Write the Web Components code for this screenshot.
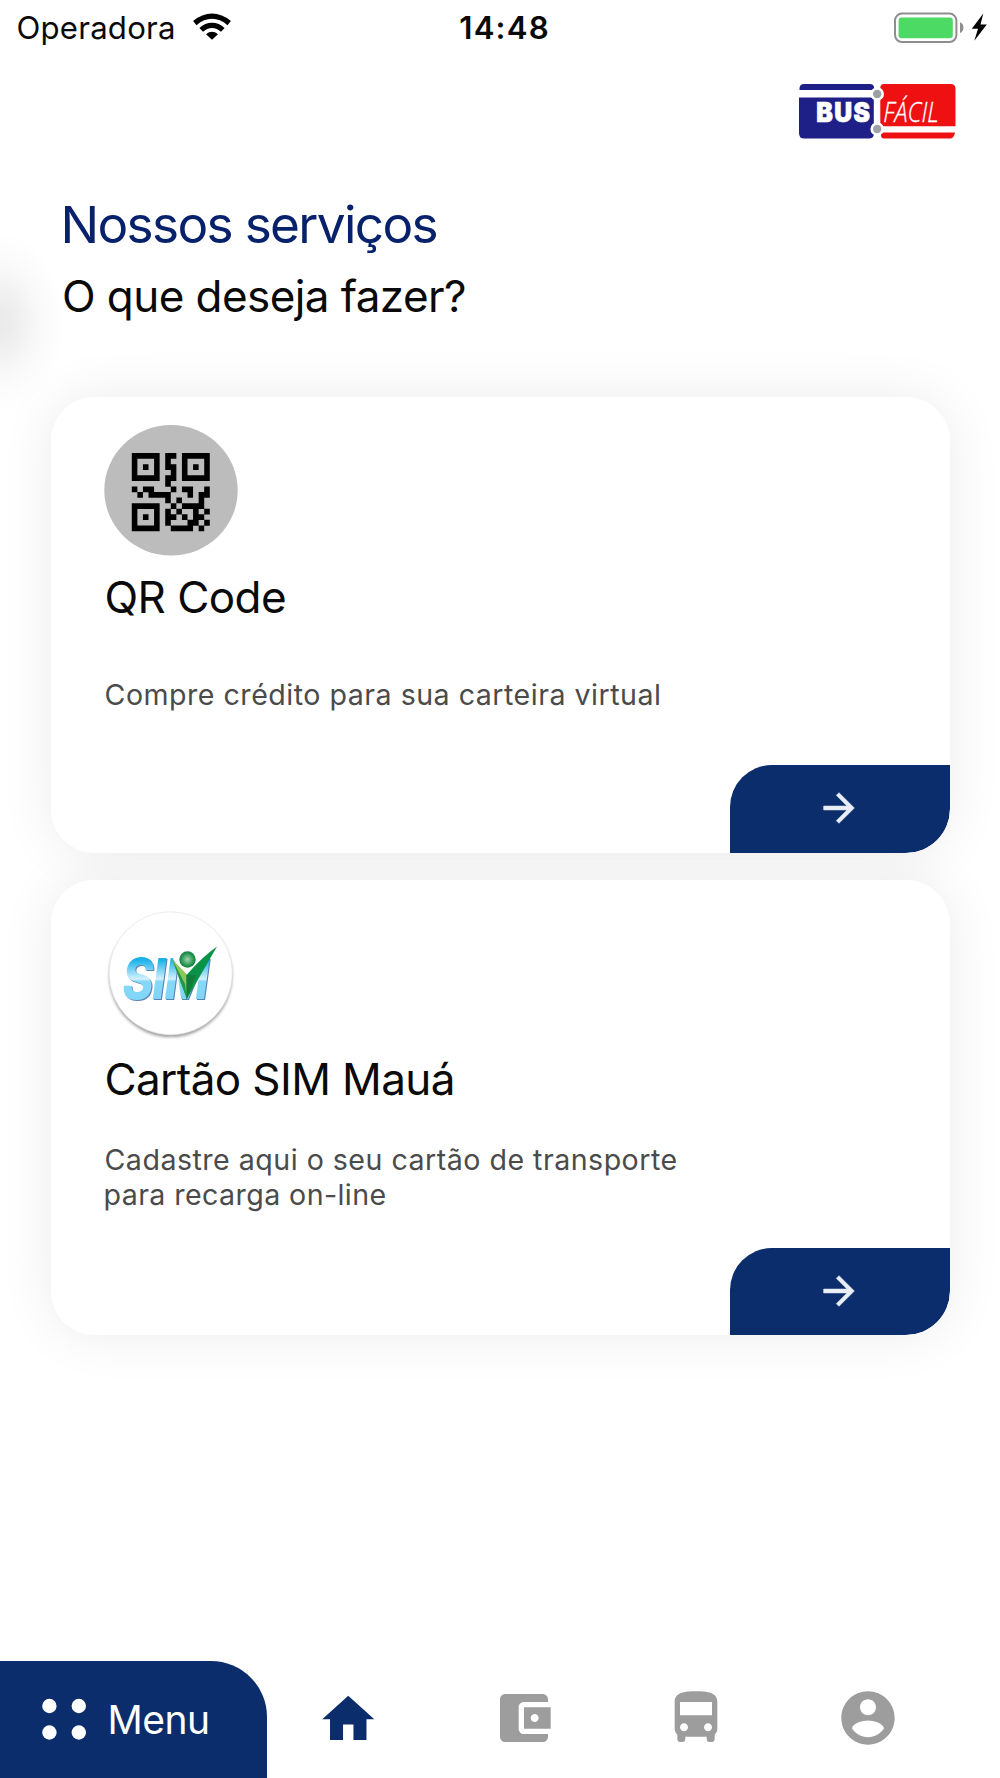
<!DOCTYPE html>
<html lang="pt-BR">
<head>
<meta charset="utf-8">
<title>Bus Fácil</title>
<style>
html,body{margin:0;background:#fff}
body{width:1000px;height:1778px;overflow:hidden;font-family:Inter,"Liberation Sans",sans-serif;color:#0a0a0a}
</style>
</head>
<body>
<bus-app></bus-app>
<script>
const define = (name, html, ready) => customElements.define(name, class extends HTMLElement {
  connectedCallback() {
    if (!this.shadowRoot) {
      const t = document.createElement('template');
      t.innerHTML = html;
      this.attachShadow({mode: 'open'}).append(t.content.cloneNode(true));
    }
    if (ready) ready(this);
  }
});

/* One line of text, tracked so that its ink spans the given width. */
define('fit-text', `
<style>:host{display:block;white-space:nowrap}</style><slot></slot>`, el => {
  const s = getComputedStyle(el), text = el.textContent;
  const ctx = document.createElement('canvas').getContext('2d');
  ctx.font = `${s.fontWeight} ${s.fontSize} ${s.fontFamily}`;
  const m = ctx.measureText(text);
  const ink = m.actualBoundingBoxLeft + m.actualBoundingBoxRight;
  el.style.letterSpacing = ((el.getAttribute('ink') - ink) / (text.length - 1)).toFixed(3) + 'px';
  el.style.marginLeft = m.actualBoundingBoxLeft.toFixed(2) + 'px';
});

define('status-bar', `
<style>
:host{display:grid;grid-template-columns:1fr auto 1fr;height:55px;line-height:57px;font-size:31.200px;box-sizing:border-box;padding:0 12px 0 17.500px}
.left,.right{display:flex}
.left svg{margin:13px 0 0 18px}
.right{justify-content:flex-end}
.right svg{margin:12px .5px 0 0}
.time{font-weight:600;width:88px;padding-left:1.500px;margin-right:-1.500px}
</style>
<div class="left"><fit-text ink="156.500" style="width:158px">Operadora</fit-text>
<svg width="38" height="27" viewBox="0 0 38 27"><g fill="none" stroke="#000"><path d="M1.800 10.100Q10 3.200 19 3.200T36.200 10.100" stroke-width="5.300"/><path d="M8.200 16.900Q13 12.400 19 12.400T29.800 16.900" stroke-width="5.300"/></g><path d="M13 21.300Q19 16.400 25 21.300L19 26.800z"/></svg></div>
<div class="time"><fit-text ink="87.500">14:48</fit-text></div>
<div class="right"><svg width="95" height="31" viewBox="0 0 95 31"><rect x="2" y="1.600" width="61.400" height="28.400" rx="7" fill="#fff" stroke="#8e8e8e" stroke-width="2"/><rect x="5.600" y="5.400" width="54.200" height="20.800" rx="3" fill="#4cd964"/><path d="M67 10.200c4.600 1 4.600 9.800 0 10.800z" fill="#8e8e8e"/><path d="M90.300 1.600L78.800 16.800h6.200l-3.700 12L93.800 12.500h-6.300z" fill="#000"/></svg></div>`);

define('brand-logo', `
<style>:host{display:flex;justify-content:flex-end;padding:29px 44.500px 0 0}svg{display:block}</style>
<svg width="156.500" height="54.500" viewBox="0 0 156.500 54.500">
<path d="M.5 6V4Q1 0 5 0H71Q74.500 0 75 3V6z" fill="#1f1f88"/>
<path d="M0 13.500H74.800V51Q74 54.500 70 54.500H5Q0 54.500 0 49z" fill="#1f1f88"/>
<path d="M81.300 42.200V3Q82 0 85 0H151.500Q156.500 0 156.500 5V42.200z" fill="#ef1012"/>
<path d="M82 48.500H156Q155 54.500 151 54.500H85Q82 54.500 82 51z" fill="#ef1012"/>
<g fill="#9da0a5" stroke="#fff" stroke-width="2.600"><circle cx="78.200" cy="10" r="5.500"/><circle cx="78.200" cy="45" r="5.500"/></g>
<text x="17.300" y="37.600" font-family="Inter" font-weight="900" font-size="26.500" letter-spacing="1.500" textLength="55" lengthAdjust="spacingAndGlyphs" fill="#fff" stroke="#fff" stroke-width=".7">BUS</text>
<text x="84.200" y="37.600" font-family="Open Sans" font-weight="300" font-style="italic" font-size="27" textLength="55.500" lengthAdjust="spacingAndGlyphs" fill="#fff" stroke="#fff" stroke-width=".3">FÁCIL</text>
</svg>`);

define('page-heading', `
<style>
:host{display:block;padding:54px 0 0 64.500px}
.title{font-size:51.300px;line-height:62px;color:#08216b}
.sub{font-size:44px;line-height:56px;margin:13.500px 0 0 -.5px}
.glow{position:absolute;left:0;top:230px;width:68px;height:184px;background:radial-gradient(ellipse 66px 90px at 0 50%,rgba(0,0,0,.082),rgba(0,0,0,.075) 15%,rgba(0,0,0,.054) 35%,rgba(0,0,0,.028) 57%,rgba(0,0,0,.01) 78%,transparent)}
</style>
<div class="glow"></div>
<div class="title"><fit-text ink="372">Nossos serviços</fit-text></div>
<div class="sub"><fit-text ink="401">O que deseja fazer?</fit-text></div>`);

define('service-card', `
<style>
:host{display:flex;flex-direction:column;box-sizing:border-box;width:899px;height:455.500px;padding-top:28px;border-radius:44px;overflow:hidden;background:#fff}
.icon{height:130.500px;padding-left:53px}
.title{font-size:44px;line-height:52px;margin:15px 0 0 55.500px}
.desc{height:144px;display:flex;flex-direction:column;justify-content:center;margin-left:54.500px;font-size:28.600px;line-height:35px;color:#4b4b4b}
.go{align-self:flex-end;margin-top:auto;width:220.500px;height:87.500px;flex:none;background:#0c2d6b;border-radius:42px 0 44px 0;display:flex;align-items:center;justify-content:center}
.go svg{margin:-1px 2px 0 0}
.body{height:340px;flex:none}
</style>
<div class="body"><div class="icon"><slot name="icon"></slot></div>
<div class="title"><slot name="title"></slot></div>
<div class="desc"><slot></slot></div></div>
<div class="go"><svg width="46" height="46" viewBox="0 0 24 24" fill="#e9edf5" stroke="#e9edf5" stroke-width=".3"><path d="M12 4l-1.410 1.410L16.170 11H4v2h12.170l-5.580 5.590L12 20l8-8z"/></svg></div>`);

define('qr-icon', `
<style>:host,svg{display:block}</style>
<svg width="134" height="131" viewBox="0 0 134 131"><ellipse cx="67" cy="65.300" rx="66.700" ry="65.300" fill="#bcbcbc"/><g transform="translate(27.800 28) scale(5.570)" fill="#000"></g></svg>`, el => {
  const rows = ['11111.11.11111','1...1.1..1...1','1.1.1.11.1.1.1','1...1..1.1...1','11111.11.11111','......1.......','1.11...1.11..1','.1.1111...1.11','......1.1...1.','11111..1.1111.','1...1.1.1..1.1','1.1.1.11.1.11.','1...1.1...11.1','11111..1111.1.'];
  let d = '';
  rows.forEach((r, y) => r.replace(/1+/g, (m, x) => { d += `M${x} ${y}h${m.length}v1.04h-${m.length}z`; }));
  el.shadowRoot.querySelector('g').innerHTML = `<path d="${d}"/>`;
});

define('sim-icon', `
<style>:host,svg{display:block}svg{overflow:visible}.word{filter:drop-shadow(1px 1px 0 #5a82b4)}</style>
<svg width="134" height="131" viewBox="0 0 134 131">
<defs><linearGradient id="b" gradientUnits="userSpaceOnUse" x1="0" y1="50" x2="0" y2="92"><stop offset=".05" stop-color="#1cb2e8"/><stop offset=".5" stop-color="#d4f1fd"/><stop offset=".56" stop-color="#85d8f8"/><stop offset="1" stop-color="#80d5f6"/></linearGradient>
<radialGradient id="g"><stop offset="0" stop-color="#a4d5ad"/><stop offset=".75" stop-color="#239650"/><stop offset="1" stop-color="#16803c"/></radialGradient>
<filter id="s" x="-20%" y="-20%" width="140%" height="140%"><feGaussianBlur stdDeviation="1.800"/></filter></defs>
<circle cx="66.700" cy="67.600" r="61.500" fill="#000" opacity=".38" filter="url(#s)"/>
<circle cx="66.700" cy="65.300" r="61.500" fill="#fff" stroke="#e6e6e6" stroke-width=".7"/>
<g class="word" font-family="Inter" font-weight="800" font-style="italic" font-size="56" fill="url(#b)"><text transform="scale(.84 1)" x="22" y="91" letter-spacing="-1.500">SIM</text></g>
<path d="M67 47L83 76 106 46 92 41z" fill="#fff"/>
<circle cx="83.500" cy="51.500" r="10.500" fill="#fff"/>
<path d="M68 51L83 66.500 83 91.500z" fill="#8bc75b"/><path d="M68 51L83 91.500 81 76z" fill="#1c9849"/><path d="M82.500 67Q98 49 113 38.500L82.500 91.500z" fill="#0a9348"/><path d="M82.500 67v24.500L92 67z" fill="#137c3d"/>
<circle cx="83.500" cy="51.500" r="8.200" fill="url(#g)"/>
</svg>`);

define('nav-icon', `
<style>:host{display:block;width:64px;height:64px}svg{display:block;width:100%;height:100%}</style>
<svg viewBox="0 0 24 24" fill="currentColor"><path/></svg>`, el => {
  const shapes = {
    home: 'M10 20v-6h4v6h5v-8h3L12 3 2 12h3v8z',
    wallet: 'M21 18v1c0 1.100-.9 2-2 2H5c-1.110 0-2-.9-2-2V5c0-1.100.89-2 2-2h14c1.100 0 2 .9 2 2v1h-9c-1.110 0-2 .9-2 2v8c0 1.100.89 2 2 2h9zm-9-2h10V8H12v8zm4-2.500c-.83 0-1.500-.67-1.500-1.500s.67-1.500 1.500-1.500 1.500.67 1.500 1.500-.67 1.500-1.500 1.500z',
    bus: 'M4 16c0 .88.39 1.670 1 2.220V20c0 .55.45 1 1 1h1c.55 0 1-.45 1-1v-1h8v1c0 .55.45 1 1 1h1c.55 0 1-.45 1-1v-1.780c.61-.55 1-1.340 1-2.220V6c0-3.500-3.580-4-8-4s-8 .5-8 4v10zm3.500 1c-.83 0-1.500-.67-1.500-1.500S6.670 14 7.500 14s1.500.67 1.500 1.500S8.330 17 7.500 17zm9 0c-.83 0-1.500-.67-1.500-1.500s.67-1.500 1.500-1.500 1.500.67 1.500 1.500-.67 1.500-1.500 1.500zm1.500-6H6V6h12v5z',
    account: 'M12 2C6.480 2 2 6.480 2 12s4.480 10 10 10 10-4.480 10-10S17.520 2 12 2zm0 3c1.660 0 3 1.340 3 3s-1.340 3-3 3-3-1.340-3-3 1.340-3 3-3zm0 14.200c-2.500 0-4.710-1.280-6-3.220.03-1.990 4-3.080 6-3.080 1.990 0 5.970 1.090 6 3.080-1.290 1.940-3.500 3.220-6 3.220z'
  };
  el.shadowRoot.querySelector('path').setAttribute('d', shapes[el.getAttribute('name')]);
});

define('bottom-nav', `
<style>
:host{display:flex;height:117px;color:#9d9d9d}
.menu{display:flex;width:266.500px;box-sizing:border-box;padding-left:42px;background:#0c2d6b;border-radius:0 56px 0 0;color:#fff;font-size:39px}
.menu svg{margin-top:37px;flex:none}
.menu fit-text{line-height:48px;margin-top:35px}
.label{padding-left:24.500px}
.tabs{display:flex;padding:25px 0 0 50.500px;gap:110px}
.on{color:#0c2d6b;width:62.500px;height:62.500px;margin:1.500px 2.500px 0 0}
</style>
<div class="menu"><svg width="44" height="42" fill="#fff"><circle cx="7.400" cy="8" r="7.200"/><circle cx="36.800" cy="8" r="7.200"/><circle cx="7.400" cy="34.500" r="7.200"/><circle cx="36.800" cy="34.500" r="7.200"/></svg><div class="label"><fit-text ink="97.500">Menu</fit-text></div></div>
<div class="tabs"><nav-icon class="on" name="home"></nav-icon><nav-icon name="wallet"></nav-icon><nav-icon name="bus" style="margin-left:-2px"></nav-icon><nav-icon name="account" style="margin-left:-2px"></nav-icon></div>`);

define('bus-app', `
<style>
:host{display:flex;flex-direction:column;width:1000px;height:1778px;overflow:hidden;position:relative;background:#fff}
main{display:flex;flex-direction:column;gap:27px;margin:73px 0 0 51px}
.shade{width:899px;height:455.500px;border-radius:44px;box-shadow:0 0 54px rgba(0,0,0,.078)}
service-card{position:relative;z-index:1}
bottom-nav{margin-top:auto}
</style>
<status-bar></status-bar>
<brand-logo></brand-logo>
<page-heading></page-heading>
<main>
<div class="shade"><service-card><qr-icon slot="icon"></qr-icon><fit-text slot="title" ink="178.500">QR Code</fit-text><fit-text ink="553.500">Compre crédito para sua carteira virtual</fit-text></service-card></div>
<div class="shade"><service-card><sim-icon slot="icon"></sim-icon><fit-text slot="title" ink="346.200">Cartão SIM Mauá</fit-text><fit-text ink="571">Cadastre aqui o seu cartão de transporte</fit-text><fit-text ink="280">para recarga on-line</fit-text></service-card></div>
</main>
<bottom-nav></bottom-nav>`);
</script>
</body>
</html>
